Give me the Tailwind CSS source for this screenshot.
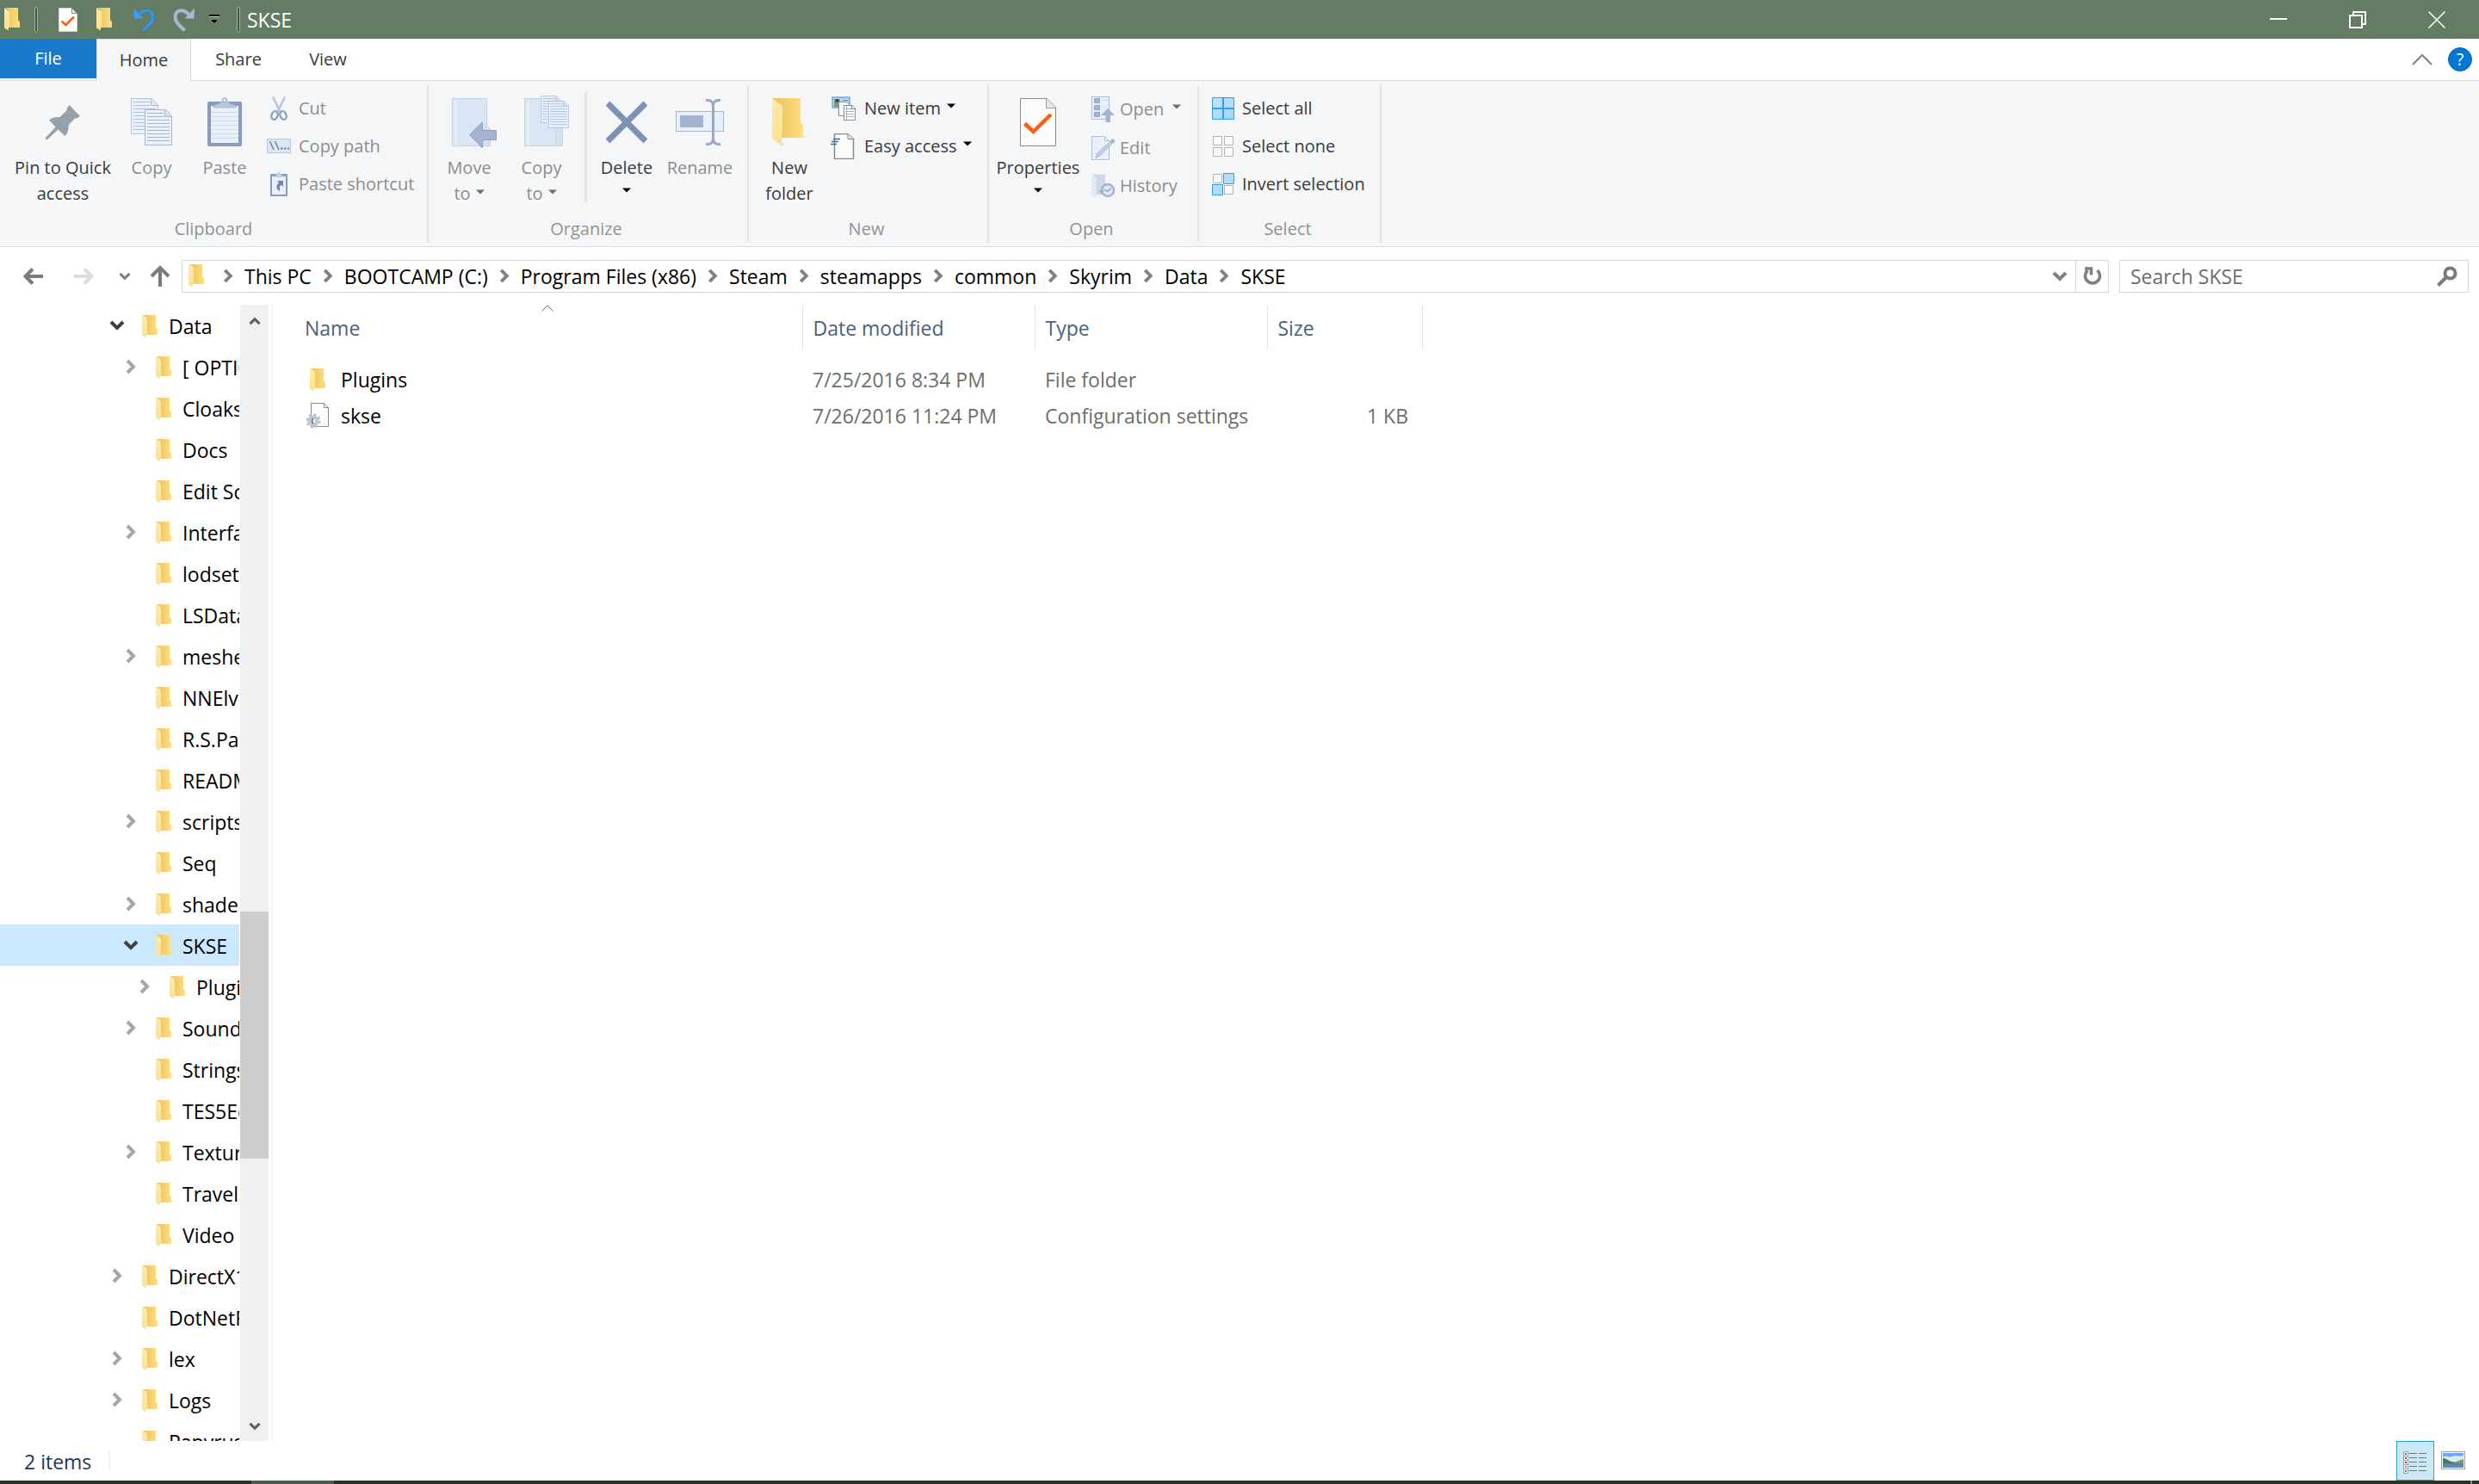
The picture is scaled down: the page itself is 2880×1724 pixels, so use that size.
<!DOCTYPE html>
<html lang="en">
<head>
    <meta charset="UTF-8">
    <meta name="viewport" content="width=device-width, initial-scale=1.0">
    <title>SKSE</title>
    <script src="https://cdn.jsdelivr.net/npm/@tailwindcss/browser@4"></script>
</head>
<body class="h-screen flex flex-col overflow-hidden bg-white font-['Open_Sans','Noto_Sans',sans-serif] text-[23px] leading-[30px] text-black">

    <!-- Shared icons -->
    <svg class="absolute w-0 h-0" aria-hidden="true">
        <defs>
            <linearGradient id="folder-back" x1="0" y1="0" x2="1" y2="0">
                <stop offset="0.2" stop-color="#ecc660"/>
                <stop offset="1" stop-color="#ffdf82"/>
            </linearGradient>
            <linearGradient id="folder-front" x1="0" y1="0" x2="0" y2="1">
                <stop offset="0" stop-color="#ffeaa8"/>
                <stop offset="1" stop-color="#ffe08a"/>
            </linearGradient>
            <linearGradient id="tile" x1="0" y1="0" x2="1" y2="1">
                <stop offset="0" stop-color="#c0e4ff"/>
                <stop offset="1" stop-color="#9fd6ff"/>
            </linearGradient>
            <symbol id="folder" viewBox="0 0 19 27">
                <path d="M0 0H16V14L18 16.500V23H5V3Z" fill="url(#folder-back)"/>
                <path d="M0 0.500L6 4V23H5V26.500L0 23.500Z" fill="url(#folder-front)"/>
            </symbol>
            <symbol id="caret" viewBox="0 0 10 6">
                <path d="M0 0.500H10L5 5.500Z" fill="currentColor"/>
            </symbol>
            <symbol id="chev-right" viewBox="0 0 12 18">
                <path d="M2 2L9 9L2 16" fill="none" stroke="currentColor" stroke-width="4"/>
            </symbol>
            <symbol id="chev-down" viewBox="0 0 18 12">
                <path d="M2 2L9 9L16 2" fill="none" stroke="currentColor" stroke-width="4"/>
            </symbol>
            <symbol id="page-check" viewBox="0 0 42 56">
                <path d="M0.500 0.500H31L41.500 11V55.500H0.500Z" fill="#fcfcfc" stroke="#8b8b8b"/>
                <path d="M30.500 1V11.500H41" fill="#e6e6e6" stroke="#9a9a9a"/>
                <path d="M5.500 29.500L15.500 39L36 19" fill="none" stroke="#f9610f" stroke-width="4.500"/>
            </symbol>
            <symbol id="page-lines" viewBox="0 0 32 42">
                <path d="M0.500 0.500H24.500L31.500 7.500V41.500H0.500Z" fill="#e8f0fb" stroke="#a5b6d2"/>
                <path d="M23.500 1V8.500H31" fill="#d5e0f0" stroke="#a5b6d2"/>
                <path d="M3 4.500H22M3 8.500H22M3 12.500H29M3 16.500H29M3 20.500H29M3 24.500H29M3 28.500H29M3 32.500H29M3 36.500H29" stroke="#a3b3d1"/>
            </symbol>
            <symbol id="blue-folder" viewBox="0 0 46 56">
                <path d="M0.500 0.500H40.500V55.500H0.500Z" fill="#dbe6f5" stroke="#c5d3e8"/>
                <path d="M4.500 3V55" stroke="#e9f0fa" stroke-width="2"/>
                <path d="M36.500 55.500V37L40.500 31L44.500 37V55.500Z" fill="#d5e0f0" stroke="#c3d1e6"/>
            </symbol>
        </defs>
    </svg>

    <!-- Title bar -->
    <header class="h-[45px] shrink-0 flex items-center bg-[#647c64] text-white">
        <svg class="w-[19px] h-[27px] ml-[5px]"><use href="#folder"/></svg>
        <div class="w-1 h-[30px] ml-4 border border-[#a2b0a2] bg-[#455845] rounded-sm"></div>
        <button class="ml-6 h-full" aria-label="Properties">
            <svg width="22" height="28" viewBox="0 0 22 28">
                <path d="M0.500 0.500H15.500L21.500 6.500V27.500H0.500Z" fill="#fff" stroke="#d5d5d5"/>
                <path d="M15.500 0.500V6.500H21.500Z" fill="#eee" stroke="#7f8f7f"/>
                <path d="M3.500 15.500L8.500 20L18 10.500" fill="none" stroke="#f9610f" stroke-width="2.500"/>
            </svg>
        </button>
        <button class="ml-[22px] h-full" aria-label="New folder">
            <svg class="w-[19px] h-[27px]"><use href="#folder"/></svg>
        </button>
        <button class="ml-6 h-full" aria-label="Undo">
            <svg width="26" height="28" viewBox="0 0 26 28">
                <path d="M6 8.500C12 0.500 22.500 2 22.500 11C22.500 17 17 21 11.500 26.500" fill="none" stroke="#2383d6" stroke-width="4"/>
                <path d="M6 8.500C12 0.500 22.500 2 22.500 11C22.500 17 17 21 11.500 26.500" fill="none" stroke="#3f9ceb" stroke-width="2"/>
                <path d="M0 0.500L1 12.500H12Z" fill="#3f9ceb"/>
            </svg>
        </button>
        <button class="ml-5 h-full" aria-label="Redo">
            <svg width="26" height="28" viewBox="0 0 26 28">
                <path d="M19 8.500C12 0.500 2.500 2 2.500 11C2.500 17 8 21 13.500 26.500" fill="none" stroke="#a9b7d2" stroke-width="4"/>
                <path d="M25 0.500L24.500 12.500H13.500Z" fill="#a9b7d2"/>
            </svg>
        </button>
        <button class="ml-4 h-full" aria-label="Customize Quick Access Toolbar">
            <svg width="12" height="12" viewBox="0 0 12 12">
                <path d="M0 1H12" stroke="#000" stroke-width="2"/>
                <path d="M0 2.500H12" stroke="#c8d2c8"/>
                <path d="M1 5.500H11L6 10.500Z" fill="#000" stroke="#c8d2c8" stroke-width="0.500"/>
            </svg>
        </button>
        <div class="w-1 h-[30px] ml-5 border border-[#a2b0a2] bg-[#455845] rounded-sm"></div>
        <h1 class="ml-2">SKSE</h1>
        <div class="ml-auto h-full flex pr-[3px]">
            <button class="w-[92px] grid place-items-center" aria-label="Minimize">
                <svg width="20" height="20" viewBox="0 0 20 20"><path d="M0 9H20" stroke="#fff" stroke-width="2"/></svg>
            </button>
            <button class="w-[92px] grid place-items-center" aria-label="Restore">
                <svg width="20" height="20" viewBox="0 0 20 20" fill="none" stroke="#fff" stroke-width="2">
                    <path d="M1 5H15V19H1Z"/><path d="M5 5V1H19V15H15"/>
                </svg>
            </button>
            <button class="w-[92px] grid place-items-center" aria-label="Close">
                <svg width="20" height="20" viewBox="0 0 20 20"><path d="M0.500 0.500L19.500 19.500M19.500 0.500L0.500 19.500" stroke="#fff" stroke-width="1.500"/></svg>
            </button>
        </div>
    </header>

    <!-- Ribbon tabs -->
    <nav class="h-[49px] shrink-0 flex border-b border-[#dadbdc] text-[#3b3b3b] text-[20px]">
        <button class="w-28 h-[46px] bg-[#1979ca] text-white">File</button>
        <button class="w-[110px] h-[49px] -mb-px bg-[#f5f6f7] border border-b-0 border-[#dadbdc]">Home</button>
        <button class="w-[110px]">Share</button>
        <button class="w-[98px]">View</button>
        <div class="ml-auto flex items-center pr-2">
            <button class="w-10 grid place-items-center" aria-label="Minimize the Ribbon">
                <svg width="24" height="14" viewBox="0 0 24 14"><path d="M1 13L12 2L23 13" fill="none" stroke="#808080" stroke-width="2"/></svg>
            </button>
            <button class="ml-2.5 size-7 rounded-full border border-[#0a62b0] bg-[#0078d7] text-white text-[20px] leading-[26px]" aria-label="Help">?</button>
        </div>
    </nav>

    <!-- Ribbon -->
    <div class="h-[193px] shrink-0 flex items-stretch py-[5px] bg-[#f5f6f7] border-b border-[#dadbdc] text-[#3b3b3b] text-[20px] whitespace-nowrap">

        <section class="w-[498px] shrink-0 flex flex-col pt-[5px] border-r-2 border-[#e2e3e4]">
            <div class="flex flex-1 items-start pl-3">
                <button class="w-[122px] flex flex-col items-center pt-1.5">
                    <span class="h-16 mb-1.5 grid place-items-center">
                        <svg width="40" height="40" viewBox="0 0 40 40">
                            <path d="M27.500 0L40 13L36 15.500H34L26.500 23.500C27 28 25.500 33 22.500 36L14.500 28.500L2 40H0V38L11.500 25.500L4 17.500C7 14.500 12 13.500 16.500 14L24.500 6.500V4Z" fill="#97a2a8"/>
                        </svg>
                    </span>
                    <span>Pin to Quick</span>
                    <span>access</span>
                </button>
                <button class="w-[84px] flex flex-col items-center pt-1.5 text-[#8d8d8d]">
                    <span class="h-16 mb-1.5 grid place-items-center">
                        <svg width="48" height="56" viewBox="0 0 48 56">
                            <use href="#page-lines" width="32" height="42" opacity="0.8"/>
                            <use href="#page-lines" x="16" y="13" width="32" height="42"/>
                        </svg>
                    </span>
                    <span>Copy</span>
                </button>
                <button class="w-[86px] flex flex-col items-center pt-1.5 text-[#8d8d8d]">
                    <span class="h-16 mb-1.5 grid place-items-center">
                        <svg width="40" height="58" viewBox="0 0 40 58">
                            <rect y="5" width="40" height="52" rx="2" fill="#8a9cbd"/>
                            <rect x="4" y="10" width="32" height="43" fill="#e8f0fb"/>
                            <path d="M4 17.500H36M4 22.500H36M4 27.500H36M4 32.500H36M4 37.500H36M4 42.500H36M4 47.500H36" stroke="#cfdbed"/>
                            <path d="M7 12V10C10 8 16 8 16 5H24C24 8 30 8 33 10V12Z" fill="#b9c8de" stroke="#9fb0cb" stroke-width="0.700"/>
                            <circle cx="20" cy="3.500" r="2.500" fill="#dfe8f4" stroke="#a9b8d0" stroke-width="1.500"/>
                        </svg>
                    </span>
                    <span>Paste</span>
                </button>
                <div class="flex flex-col items-start text-[#8d8d8d]">
                    <button class="h-11 flex items-center gap-[7px] px-1">
                        <svg class="w-8" height="28" viewBox="0 0 32 28">
                            <path d="M9 0.500L17.500 18M23 0.500L14.500 18" stroke="#b6c4da" stroke-width="2.500"/>
                            <ellipse cx="11" cy="22" rx="3.500" ry="5" transform="rotate(20 11 22)" fill="none" stroke="#94a5c3" stroke-width="2.500"/>
                            <ellipse cx="21" cy="22" rx="3.500" ry="5" transform="rotate(-20 21 22)" fill="none" stroke="#94a5c3" stroke-width="2.500"/>
                        </svg>
                        Cut
                    </button>
                    <button class="h-11 flex items-center gap-[7px] px-1">
                        <svg class="w-8" height="18" viewBox="0 0 32 18">
                            <rect x="2.500" y="0.500" width="27" height="16" fill="#dbe6f4" stroke="#b8c7de"/>
                            <path d="M5.500 3L10 13M11.500 3L16 13" stroke="#6f83a8" stroke-width="1.500"/>
                            <path d="M18 11.500H20.500M22 11.500H24.500M26 11.500H28" stroke="#6f83a8" stroke-width="2"/>
                        </svg>
                        Copy path
                    </button>
                    <button class="h-11 flex items-center gap-[7px] px-1">
                        <svg class="w-8" height="30" viewBox="0 0 32 30">
                            <rect x="6" y="3" width="20" height="26" rx="1" fill="#8a9cbd"/>
                            <rect x="8" y="6" width="16" height="21" fill="#e8f0fb"/>
                            <path d="M10 7C10 5 14 5 14 2.500H18C18 5 22 5 22 7Z" fill="#c3d0e4"/>
                            <circle cx="16" cy="2" r="1.500" fill="#c3d0e4"/>
                            <path d="M14 11H21V18L18.500 15.800C16.500 18 16.500 20 17.500 23C13 21.500 11.500 17 16 13.500Z" fill="#7186ad"/>
                        </svg>
                        Paste shortcut
                    </button>
                </div>
            </div>
            <h2 class="text-center text-[#929292]">Clipboard</h2>
        </section>

        <section class="w-[372px] shrink-0 flex flex-col pt-[5px] border-r-2 border-[#e2e3e4]">
            <div class="flex flex-1 items-start pl-[5px]">
                <button class="w-[84px] flex flex-col items-center pt-1.5 text-[#8d8d8d]">
                    <span class="h-16 mb-1.5 grid place-items-center">
                        <svg width="40" height="60" viewBox="0 0 40 60" class="overflow-visible">
                            <use href="#blue-folder" y="2" width="46" height="56"/>
                            <path d="M20.500 44.500L35.500 30V39.500H51.500V50.500H35.500V60Z" fill="#a3b3d0" stroke="#8fa1c2"/>
                        </svg>
                    </span>
                    <span>Move</span>
                    <span class="flex items-center gap-1.5">to <svg class="w-2.5 h-1.5 mb-1 text-[#6d6d6d]"><use href="#caret"/></svg></span>
                </button>
                <button class="w-[84px] flex flex-col items-center pt-1.5 text-[#8d8d8d]">
                    <span class="h-16 mb-1.5 grid place-items-center">
                        <svg width="40" height="60" viewBox="0 0 40 60" class="overflow-visible">
                            <use href="#blue-folder" y="2" width="46" height="56"/>
                            <use href="#page-lines" x="19" y="-1" width="24" height="32" opacity="0.85"/>
                            <use href="#page-lines" x="28" y="5" width="24" height="32"/>
                        </svg>
                    </span>
                    <span>Copy</span>
                    <span class="flex items-center gap-1.5">to <svg class="w-2.5 h-1.5 mb-1 text-[#6d6d6d]"><use href="#caret"/></svg></span>
                </button>
                <div class="w-[3px] h-32 mt-[3px] ml-2 mr-1 bg-[#e2e3e4]"></div>
                <button class="w-[84px] flex flex-col items-center pt-1.5">
                    <span class="h-16 mb-1.5 grid place-items-center">
                        <svg width="50" height="50" viewBox="0 0 50 50">
                            <path d="M3 3L47 47M47 3L3 47" stroke="#8092b4" stroke-width="7"/>
                        </svg>
                    </span>
                    <span>Delete</span>
                    <svg class="w-2.5 h-1.5 mt-2 text-black"><use href="#caret"/></svg>
                </button>
                <button class="w-[86px] flex flex-col items-center pt-1.5 text-[#8d8d8d]">
                    <span class="h-16 mb-1.5 grid place-items-center">
                        <svg width="56" height="54" viewBox="0 0 56 54">
                            <rect x="0.500" y="14.500" width="55" height="23" fill="#e8f0fb" stroke="#a5b6d2"/>
                            <rect x="5" y="19" width="27" height="14" fill="#a3b3d0"/>
                            <path d="M35 1.500C41 1 43.500 3.500 43.500 8C43.500 3.500 46 1 52 1.500M43.500 7V46M35 52.500C41 53 43.500 50.500 43.500 46C43.500 50.500 46 53 52 52.500" fill="none" stroke="#98a9c8" stroke-width="3"/>
                        </svg>
                    </span>
                    <span>Rename</span>
                </button>
            </div>
            <h2 class="pr-1 text-center text-[#929292]">Organize</h2>
        </section>

        <section class="w-[279px] shrink-0 flex flex-col pt-[5px] border-r-2 border-[#e2e3e4]">
            <div class="flex flex-1 items-start pl-[3px]">
                <button class="w-[88px] flex flex-col items-center pt-1.5">
                    <span class="h-16 mb-1.5 grid place-items-center">
                        <svg width="40" height="56" viewBox="0 0 40 56">
                            <path d="M10 50L15 54L11 55ZM34 44H40L36 46Z" fill="#dcdcdc"/>
                            <path d="M0 0H33V28L36 31V46H11V9Z" fill="url(#folder-back)"/>
                            <path d="M0 0.500L12 9V39L11 40V55L0 46.500Z" fill="url(#folder-front)"/>
                        </svg>
                    </span>
                    <span>New</span>
                    <span>folder</span>
                </button>
                <div class="flex flex-col items-start">
                    <button class="h-11 flex items-center gap-[7px] px-1">
                        <svg class="w-8" height="28" viewBox="0 0 32 28">
                            <rect x="2" y="1" width="20" height="12" fill="#b9dcf2" stroke="#3f88b5"/>
                            <rect x="4" y="3" width="7" height="9" fill="#6f9c86"/>
                            <circle cx="7.500" cy="5" r="2" fill="#4b3a2e"/>
                            <path d="M14 4.500H20" stroke="#3f88b5"/>
                            <path d="M9.500 6.500H19L22.500 10V22.500H9.500Z" fill="#fcfcfc" stroke="#8b8b8b"/>
                            <path d="M15.500 10.500H25L28.500 14V27.500H15.500Z" fill="#fff" stroke="#8b8b8b"/>
                            <path d="M17 14.500H27M17 17.500H27M17 20.500H27M17 23.500H27" stroke="#8fb9e0"/>
                            <path d="M18.500 11V27" stroke="#e9a0a0"/>
                            <path d="M24.500 11V14.500H28" fill="none" stroke="#8b8b8b"/>
                        </svg>
                        New item
                        <svg class="w-2.5 h-1.5 mb-1.5 text-black"><use href="#caret"/></svg>
                    </button>
                    <button class="h-11 flex items-center gap-[7px] px-1">
                        <svg class="w-8" height="30" viewBox="0 0 32 30">
                            <path d="M4.500 0.500H20L26.500 6.500V29.500H4.500Z" fill="#fbfbfb" stroke="#8b8b8b" stroke-width="1.500"/>
                            <path d="M20 0.500V6.500H26.500" fill="#e6e6e6" stroke="#8b8b8b"/>
                            <path d="M3 6.500H11M1 9.500H9M0 12.500H7" stroke="#2f6fb0" stroke-width="1.500"/>
                        </svg>
                        Easy access
                        <svg class="w-2.5 h-1.5 mb-1.5 text-black"><use href="#caret"/></svg>
                    </button>
                </div>
            </div>
            <h2 class="pr-1 text-center text-[#929292]">New</h2>
        </section>

        <section class="w-[244px] shrink-0 flex flex-col pt-[5px] border-r-2 border-[#e2e3e4]">
            <div class="flex flex-1 items-start pl-0.5">
                <button class="w-[110px] flex flex-col items-center pt-1.5">
                    <span class="h-16 mb-1.5 grid place-items-center">
                        <svg class="w-[42px] h-14"><use href="#page-check"/></svg>
                    </span>
                    <span>Properties</span>
                    <svg class="w-2.5 h-1.5 mt-2 text-black"><use href="#caret"/></svg>
                </button>
                <div class="flex flex-col items-start text-[#8d8d8d]">
                    <button class="h-[46px] flex items-center gap-1 px-1">
                        <svg class="w-8" height="30" viewBox="0 0 32 30">
                            <rect x="3.500" y="0.500" width="20" height="26" fill="#e8f0fb" stroke="#b0bfd8"/>
                            <path d="M6.500 2.500H12.500V7.500H6.500ZM6.500 10.500H12.500V15.500H6.500ZM6.500 18.500H12.500V23.500H6.500Z" fill="#a3b3d0" stroke="#94a5c3"/>
                            <path d="M15 4.500H22M15 12.500H20" stroke="#cbd8ea"/>
                            <path d="M22 14L30 22H25V30H19.500V22H14Z" fill="#a3b3d0"/>
                        </svg>
                        Open
                        <svg class="w-2.5 h-1.5 ml-1.5 mb-1.5 text-[#6d6d6d]"><use href="#caret"/></svg>
                    </button>
                    <button class="h-11 flex items-center gap-1 px-1">
                        <svg class="w-8" height="28" viewBox="0 0 32 28">
                            <path d="M3.500 0.500H18.500L23.500 5.500V27.500H3.500Z" fill="#e8f0fb" stroke="#b0bfd8"/>
                            <path d="M18.500 0.500V5.500H23.500" fill="none" stroke="#b0bfd8"/>
                            <path d="M8 25.500L10 20L25 6L27.500 8.500L12.500 23Z" fill="#c3d1e6" stroke="#a9b8d2"/>
                            <circle cx="27.500" cy="6" r="2.500" fill="#a3b3d0"/>
                        </svg>
                        Edit
                    </button>
                    <button class="h-11 flex items-center gap-1 px-1">
                        <svg class="w-8" height="28" viewBox="0 0 32 28">
                            <path d="M4 0.500H19V24H8V5Z" fill="#ccd9eb"/>
                            <path d="M3 0.500L8.500 5V27.500L3 24Z" fill="#e1eaf6"/>
                            <circle cx="22" cy="19" r="7" fill="#e0e9f5" stroke="#a3b3d0" stroke-width="2.500"/>
                            <path d="M18 18L21.500 20.500L26 16.500" fill="none" stroke="#8fa1c2" stroke-width="1.500"/>
                            <path d="M11 19H18L14.500 24Z" fill="#a3b3d0"/>
                        </svg>
                        History
                    </button>
                </div>
            </div>
            <h2 class="pr-1 text-center text-[#929292]">Open</h2>
        </section>

        <section class="w-[212px] shrink-0 flex flex-col pt-[5px] border-r-2 border-[#e2e3e4]">
            <div class="flex flex-1 items-start pl-2">
                <div class="flex flex-col items-start">
                    <button class="h-11 flex items-center gap-1.5 px-1">
                        <svg class="w-8" height="28" viewBox="0 0 32 28">
                            <path d="M4 2H16V14H4ZM17 2H28V14H17ZM4 15H16V26H4ZM17 15H28V26H17Z" fill="url(#tile)"/>
                            <path d="M3.500 1.500H28.500V26.500H3.500Z" fill="none" stroke="#3a9be8"/>
                            <path d="M16 1V27M3 14H29" stroke="#3a9be8" stroke-width="2"/>
                        </svg>
                        Select all
                    </button>
                    <button class="h-11 flex items-center gap-1.5 px-1">
                        <svg class="w-8" height="28" viewBox="0 0 32 28">
                            <path d="M4.500 2.500H14.500V12.500H4.500ZM17.500 2.500H27.500V12.500H17.500ZM4.500 15.500H14.500V25.500H4.500ZM17.500 15.500H27.500V25.500H17.500Z" fill="#fafafa" stroke="#b4b4b4"/>
                        </svg>
                        Select none
                    </button>
                    <button class="h-11 flex items-center gap-1.5 px-1">
                        <svg class="w-8" height="28" viewBox="0 0 32 28">
                            <path d="M4.500 2.500H14.500V12.500H4.500ZM17.500 15.500H27.500V25.500H17.500Z" fill="#fafafa" stroke="#b4b4b4"/>
                            <path d="M16.500 1.500H28.500V13.500H16.500ZM3.500 14.500H15.500V26.500H3.500Z" fill="url(#tile)" stroke="#3a9be8"/>
                        </svg>
                        Invert selection
                    </button>
                </div>
            </div>
            <h2 class="pr-1 text-center text-[#929292]">Select</h2>
        </section>
    </div>

    <!-- Address bar -->
    <div class="h-[67px] shrink-0 flex items-center pl-2.5 pr-3 text-[#808080]">
        <button class="w-[58px] grid place-items-center" aria-label="Back">
            <svg width="24" height="20" viewBox="0 0 24 20"><path d="M23 10H3M11 1.500L2.500 10L11 18.500" fill="none" stroke="#7b7b7b" stroke-width="4"/></svg>
        </button>
        <button class="w-[58px] grid place-items-center" aria-label="Forward">
            <svg width="24" height="20" viewBox="0 0 24 20"><path d="M1 10H21M13 1.500L21.500 10L13 18.500" fill="none" stroke="#dcdcdc" stroke-width="4"/></svg>
        </button>
        <button class="w-[38px] grid place-items-center" aria-label="Recent locations">
            <svg width="14" height="10" viewBox="0 0 18 12"><use href="#chev-down" width="18" height="12"/></svg>
        </button>
        <button class="w-[44px] grid place-items-center" aria-label="Up">
            <svg width="24" height="26" viewBox="0 0 24 26"><path d="M12 25V3M2 13L12 3L22 13" fill="none" stroke="#7b7b7b" stroke-width="4"/></svg>
        </button>
        <div class="ml-[3px] h-[38px] flex-1 flex items-stretch border border-[#d9d9d9]">
            <nav class="flex-1 flex items-center gap-[13px] pl-[7px] text-black" aria-label="Address">
                <svg class="w-[19px] h-[27px] mr-2"><use href="#folder"/></svg>
                <svg class="w-3 h-[17px] text-[#808080]"><use href="#chev-right"/></svg>
                <a href="#">This PC</a>
                <svg class="w-3 h-[17px] text-[#808080]"><use href="#chev-right"/></svg>
                <a href="#">BOOTCAMP (C:)</a>
                <svg class="w-3 h-[17px] text-[#808080]"><use href="#chev-right"/></svg>
                <a href="#">Program Files (x86)</a>
                <svg class="w-3 h-[17px] text-[#808080]"><use href="#chev-right"/></svg>
                <a href="#">Steam</a>
                <svg class="w-3 h-[17px] text-[#808080]"><use href="#chev-right"/></svg>
                <a href="#">steamapps</a>
                <svg class="w-3 h-[17px] text-[#808080]"><use href="#chev-right"/></svg>
                <a href="#">common</a>
                <svg class="w-3 h-[17px] text-[#808080]"><use href="#chev-right"/></svg>
                <a href="#">Skyrim</a>
                <svg class="w-3 h-[17px] text-[#808080]"><use href="#chev-right"/></svg>
                <a href="#">Data</a>
                <svg class="w-3 h-[17px] text-[#808080]"><use href="#chev-right"/></svg>
                <a href="#">SKSE</a>
            </nav>
            <button class="w-9 grid place-items-center" aria-label="Previous locations">
                <svg class="w-[18px] h-3"><use href="#chev-down"/></svg>
            </button>
            <button class="w-[38px] grid place-items-center border-l border-[#d9d9d9]" aria-label="Refresh">
                <svg width="22" height="22" viewBox="0 0 22 22">
                    <path d="M16.500 4A8.500 8.500 0 1 1 5.500 4" fill="none" stroke="#808080" stroke-width="3.500"/>
                    <path d="M2 2H9.500V9.500" fill="none" stroke="#808080" stroke-width="3.500"/>
                </svg>
            </button>
        </div>
        <div class="ml-3 w-[406px] h-[38px] flex items-center border border-[#d9d9d9] pl-3 pr-3">
            <input type="text" placeholder="Search SKSE" aria-label="Search SKSE" class="flex-1 min-w-0 outline-none placeholder:text-[#6d6d6d]">
            <svg width="24" height="24" viewBox="0 0 24 24">
                <circle cx="15.500" cy="8.500" r="6" fill="none" stroke="#7b7b7b" stroke-width="4"/>
                <path d="M1.500 22.500L11 13" stroke="#7b7b7b" stroke-width="4"/>
            </svg>
        </div>
    </div>

    <!-- Tree and file list -->
    <div class="flex-1 min-h-0 flex">
        <aside class="w-[278px] shrink-0 overflow-hidden">
            <ul id="tree"></ul>
        </aside>
        <div class="w-[34px] shrink-0 flex flex-col items-center bg-[#f0f0f0] border-l border-white text-[#606060]">
            <svg class="w-3.5 h-2.5 mt-3.5 rotate-180"><use href="#chev-down"/></svg>
            <div class="w-full mt-[681px] h-[287px] bg-[#cdcdcd]"></div>
            <svg class="w-3.5 h-2.5 mt-auto mb-3"><use href="#chev-down"/></svg>
        </div>
        <div class="w-0.5 ml-[3px] shrink-0 bg-[#f5f5f5]"></div>
        <main class="flex-1 relative pl-[25px]">
            <svg class="absolute left-[312px] top-0" width="14" height="8" viewBox="0 0 14 8"><path d="M0.500 7.500L7 1L13.500 7.500" fill="none" stroke="#6d6d6d"/></svg>
            <table class="table-fixed w-[1310px] border-collapse">
                <colgroup>
                    <col class="w-[590px]">
                    <col class="w-[270px]">
                    <col class="w-[270px]">
                    <col class="w-[180px]">
                </colgroup>
                <thead class="text-left text-[#4c607a]">
                    <tr class="h-[52px]">
                        <th class="font-normal px-3 pt-0.5 border-r border-[#e5e5e5]">Name</th>
                        <th class="font-normal px-3 pt-0.5 border-r border-[#e5e5e5]">Date modified</th>
                        <th class="font-normal px-3 pt-0.5 border-r border-[#e5e5e5]">Type</th>
                        <th class="font-normal px-3 pt-0.5 border-r border-[#e5e5e5]">Size</th>
                    </tr>
                </thead>
                <tbody class="text-[#6d6d6d] whitespace-nowrap before:block before:h-3.5">
                    <tr class="h-[42px]">
                        <td class="pl-[18px]">
                            <div class="flex items-center text-black">
                                <svg class="w-[19px] h-[27px] mr-[17px]"><use href="#folder"/></svg>Plugins
                            </div>
                        </td>
                        <td class="px-3">7/25/2016 8:34 PM</td>
                        <td class="px-3">File folder</td>
                        <td></td>
                    </tr>
                    <tr class="h-[42px]">
                        <td class="pl-3.5">
                            <div class="flex items-center text-black">
                                <svg class="mr-3.5" width="26" height="30" viewBox="0 0 26 30">
                                    <path d="M5.500 0.500H20.500L25.500 5.500V27.500H5.500Z" fill="#fbfbfb" stroke="#8b8b8b"/>
                                    <path d="M20.500 0.500V5.500H25.500" fill="none" stroke="#8b8b8b"/>
                                    <circle cx="8" cy="21" r="7" fill="none" stroke="#b4bfca" stroke-width="3" stroke-dasharray="3 2.500"/>
                                    <circle cx="8" cy="21" r="4.500" fill="#e8ecef" stroke="#bcc8d3" stroke-width="4"/>
                                    <path d="M8 18C6 19 6 23 8 24" fill="none" stroke="#5f6b78" stroke-width="1.500"/>
                                </svg>skse
                            </div>
                        </td>
                        <td class="px-3">7/26/2016 11:24 PM</td>
                        <td class="px-3">Configuration settings</td>
                        <td class="pr-4 text-right">1 KB</td>
                    </tr>
                </tbody>
            </table>
        </main>
    </div>

    <!-- Status bar -->
    <footer class="h-[46px] shrink-0 flex items-center pl-7 pr-2 text-[#1e395b]">
        <span class="pt-0.5">2 items</span>
        <div class="ml-5 w-0.5 h-[22px] bg-[#f2f2f2]"></div>
        <button class="ml-auto w-11 h-full grid place-items-center bg-[#cbe8f6] border border-[#26a0da]" aria-label="Details view">
            <svg class="mt-1" width="28" height="26" viewBox="0 0 28 26">
                <path d="M0.500 0.500H5.500V25.500H0.500ZM0.500 5.500H5.500M0.500 10.500H5.500M0.500 15.500H5.500M0.500 20.500H5.500" fill="#fff" stroke="#a0a0a0"/>
                <path d="M7 2.500H16M18 2.500H27M7 7.500H16M18 7.500H27M7 12.500H16M18 12.500H27M7 17.500H16M18 17.500H27M7 22.500H16M18 22.500H27" stroke="#767676"/>
                <path d="M2 3H4M2 23H4" stroke="#3f7fae" stroke-width="2"/>
                <path d="M2 8H4" stroke="#7f6a4e" stroke-width="2"/>
                <path d="M2 13H4" stroke="#c22" stroke-width="2"/>
                <path d="M2 18H4" stroke="#7ab05a" stroke-width="2"/>
            </svg>
        </button>
        <button class="w-11 h-full grid place-items-center" aria-label="Large icons view">
            <svg width="28" height="22" viewBox="0 0 28 22">
                <rect x="0.500" y="0.500" width="27" height="20" fill="#fff" stroke="#a0a0a0"/>
                <rect x="2" y="2" width="24" height="17" fill="#6ea8f5"/>
                <path d="M2 7C6 4 9 8 13 6C18 4 22 7 26 5V14H2Z" fill="#dcebf7"/>
                <path d="M2 8C6 8 8 11 14 12.500H26V15H2Z" fill="#4a7a58"/>
                <path d="M16 12.500L26 9V14H14Z" fill="#6f9a80"/>
                <rect x="2" y="14.500" width="24" height="4.500" fill="#5b88b8"/>
            </svg>
        </button>
    </footer>
    <div class="h-1 shrink-0 flex bg-[#2b3326]">
        <div class="ml-[292px] w-24 bg-[#4b5e4a]"></div>
        <div class="ml-auto mr-2 w-0.5 bg-[#8a8f88]"></div>
    </div>

    <script>
        // [level, arrow, name]
        const rows = [
            [1, 'open', 'Data'],
            [2, 'closed', '[ OPTIONAL ]'],
            [2, '', 'Cloaks'],
            [2, '', 'Docs'],
            [2, '', 'Edit Scripts'],
            [2, 'closed', 'Interface'],
            [2, '', 'lodsettings'],
            [2, '', 'LSData'],
            [2, 'closed', 'meshes'],
            [2, '', 'NNElves'],
            [2, '', 'R.S.Patch'],
            [2, '', 'README'],
            [2, 'closed', 'scripts'],
            [2, '', 'Seq'],
            [2, 'closed', 'shaders'],
            [2, 'open', 'SKSE'],
            [3, 'closed', 'Plugins'],
            [2, 'closed', 'Sound'],
            [2, '', 'Strings'],
            [2, '', 'TES5Edit'],
            [2, 'closed', 'Textures'],
            [2, '', 'Travel'],
            [2, '', 'Video'],
            [1, 'closed', 'DirectX10'],
            [1, '', 'DotNetFX'],
            [1, 'closed', 'lex'],
            [1, 'closed', 'Logs'],
            [1, '', 'Papyrus']
        ];
        const indent = { 1: 'pl-[126px]', 2: 'pl-[142px]', 3: 'pl-[158px]' };
        const arrows = {
            open: '<svg class="w-[18px] h-3 text-[#404040]"><use href="#chev-down"/></svg>',
            closed: '<svg class="w-3 h-[18px] text-[#a6a6a6]"><use href="#chev-right"/></svg>',
            '': ''
        };

        document.getElementById('tree').innerHTML = rows.map(([level, arrow, name]) => `
            <li class="h-12 flex items-center whitespace-nowrap ${indent[level]} ${name === 'SKSE' ? 'bg-[#cce8ff]' : ''}">
                <span class="w-5 shrink-0 grid place-items-center">${arrows[arrow]}</span>
                <svg class="w-[19px] h-[27px] ml-[19px] mr-3 mt-0.5 shrink-0"><use href="#folder"/></svg>
                <span class="pt-0.5">${name}</span>
            </li>`).join('');
    </script>
</body>
</html>
